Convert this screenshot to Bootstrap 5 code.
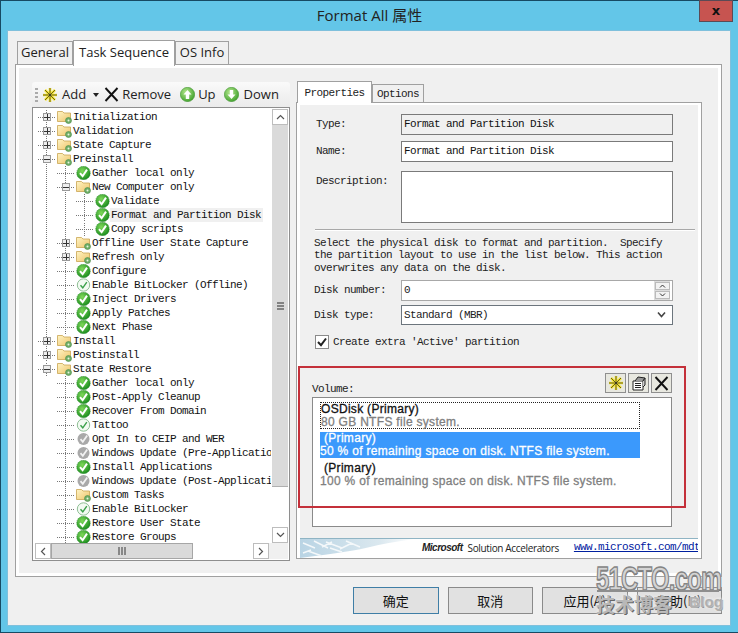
<!DOCTYPE html>
<html lang="zh">
<head>
  <meta charset="UTF-8" />
  <title>Format All 属性</title>
  <link href="https://cdn.jsdelivr.net/npm/bootstrap@5.3.3/dist/css/bootstrap.min.css" rel="stylesheet" />
  <style>
    html, body { height: 100%; }
    body { margin: 0; background: #63c6e8; overflow: hidden; }

    .win { width: 738px; height: 633px; border: 1px solid #174a63; border-right-width: 0; background: #63c6e8; position: relative; font-family: "Open Sans", sans-serif; color: #111; }
    .titlebar { height: 30px; font-size: 15px; line-height: 28px; color: #222; font-family: "Open Sans", "Noto Sans CJK SC", sans-serif; text-align: center; }
    .close-x { position: absolute; top: -1px; right: 5px; width: 34px; height: 22px; background: #c75450; border: 1px solid #5b4a55; font: bold 13px/19px "DejaVu Sans", sans-serif; color: #111; text-align: center; }
    .client { margin: 0 7px 0 7px; width: 722px; height: 594px; background: #f0f0f0; padding: 9px 8px 0 7px; box-shadow: 0 0 0 1px #7fc0dc; }

    /* tabs */
    .tabs { border: 0; height: 24px; padding-left: 2px; align-items: flex-end; flex-wrap: nowrap; position: relative; z-index: 1; }
    .tabs .nav-link { border: 1px solid #a0a0a0; border-bottom: 0; border-radius: 0; background: #f0f0f0; color: #222; padding: 0; margin: 0; text-align: center; font-size: 13px; line-height: 21px; height: 23px; }
    .tabs .nav-link.active { background: #fff; height: 26px; line-height: 23px; color: #222; border-color: #a0a0a0; margin-bottom: -2px; padding-bottom: 3px; }
    .tabs .tab-general { width: 56px; }
    .tabs .tab-seq { width: 102px; }
    .tabs .tab-info { width: 54px; }
    .outer-pane { height: 513px; border: 1px solid #a0a0a0; background: #fff; padding: 3px; }
    .outer-inner { height: 100%; background: #f0f0f0; padding: 14px 0 0 13px; }

    /* left: toolbar + tree */
    .left-col { width: 258px; flex: none; }
    .tbar { height: 25px; background: linear-gradient(#fafafa, #f0f0f0 60%, #ebebeb); border-radius: 3px 3px 0 0; font-size: 13px; color: #222; padding-left: 3px; align-items: center; }
    .grip { width: 3px; height: 14px; margin-right: 4px; background: repeating-linear-gradient(#aaa 0 2px, transparent 2px 4px); }
    .tree { height: 454px; border: 1px solid #8e8e8e; background: #fff; padding: 1px; }
    .tree-top { height: 434px; }
    .tree-rows { width: 237px; padding: 1px 0 0 3px; overflow: hidden; height: 434px; }
    .trow { height: 14px; white-space: nowrap; font: 11px/14px "Liberation Mono", monospace; letter-spacing: -.6px; color: #111; }
    .trow .txt { padding: 0 2px 0 1px; margin-left: 0; }
    .trow .txt.cur { background: #f0f0f0; }
    .gcell { width: 19px; height: 14px; flex: none; background-repeat: no-repeat; }
    .g-l { background-image: linear-gradient(#777 50%, transparent 50%); background-size: 1px 2px; background-position: 9px 0; background-repeat: repeat-y; }
    .g-t { background-image: linear-gradient(#777 50%, transparent 50%), linear-gradient(90deg, #777 50%, transparent 50%); background-size: 1px 2px, 2px 1px; background-position: 9px 0, 9px 7px; background-repeat: repeat-y, repeat-x; }
    .g-e { background-image: linear-gradient(#777 50%, transparent 50%), linear-gradient(90deg, #777 50%, transparent 50%); background-size: 1px 2px, 2px 1px; background-position: 9px -7px, 9px 7px; background-repeat: repeat-y, repeat-x; }
    .exbox { display: block; width: 8px; height: 8px; margin: 3px 0 0 6px; border: 1px solid #999; background: #eee linear-gradient(#333, #333) center / 6px 1px no-repeat; }
    .exbox.plus { background: linear-gradient(#333, #333) center / 6px 1px no-repeat, linear-gradient(#333, #333) center / 1px 6px no-repeat, #eee; }
    .ticon { width: 15px; height: 14px; margin: 0 0 0 1px; flex: none; display: block; }
    .vsb { width: 17px; flex: none; border-left: 1px solid #fff; }
    .sb-btn { width: 16px; height: 16px; border: 1px solid #bdbdbd; background: #fff; flex: none; display: flex; align-items: center; justify-content: center; }
    .vthumb { height: 362px; width: 16px; background: #dadada; border-bottom: 1px solid #b0b0b0; display: flex; align-items: center; justify-content: center; }
    .hsb { height: 16px; padding-left: 1px; }
    .hthumb { width: 142px; background: #dadada; border: 1px solid #a6a6a6; display: flex; align-items: center; justify-content: center; }
    .corner { width: 19px; background: #f0f0f0; flex: none; }

    /* right: properties */
    .right-col { width: 406px; margin-left: 6px; flex: none; }
    .tabs2 { height: 20px; padding-left: 0; }
    .tabs2 .nav-link { font: 11px/17px "Liberation Mono", monospace; letter-spacing: -.6px; height: 18px; padding-top: 1px; }
    .tabs2 .nav-link.active { height: 22px; line-height: 18px; margin-bottom: -1px; padding-top: 2px; }
    .tabs2 .tab-prop { width: 75px; margin-left: 1px; }
    .tabs2 .tab-opt { width: 52px; }
    .prop-pane { height: 457px; border: 1px solid #a0a0a0; background: #fff; padding: 2px 3px; }
    .prop-inner { height: 100%; background: #f0f0f0; position: relative; font: 11px/14px "Liberation Mono", monospace; letter-spacing: -.6px; color: #222; }
    .prop-body { height: 433px; padding: 9px 0 0 14px; }
    .frow { display: flex; width: 359px; }
    .flabel { width: 87px; flex: none; padding-top: 3px; }
    .flabel.inset { padding-left: 2px; }
    .fld { flex: 1; min-width: 0; height: 21px; border: 1px solid #7a7a7a; border-radius: 0; background: #fff; padding: 0 2px 2px; font: inherit; letter-spacing: inherit; color: #111; box-shadow: none; }
    .fld:disabled, .fld.ro { background: #f0f0f0; }
    .fld-area { height: 52px; resize: none; }
    .sep { height: 0; width: 380px; margin: 6px 0 0 1px; border-top: 1px solid #a8a8a8; border-bottom: 1px solid #fff; }
    .help { margin: 6px 0 0; line-height: 12.4px; white-space: pre; }
    .numbox { flex: 1; height: 21px; border: 1px solid #a8a8a8; background: #fff; padding: 0 2px; line-height: 18px; }
    .spin { width: 16px; flex: none; background: #dcdcdc; padding: 1px 0 1px 1px; gap: 1px; }
    .spin span { flex: 1; background: #f2f2f2; border: 1px solid #bbb; display: flex; align-items: center; justify-content: center; }
    .seltxt { height: 20px; line-height: 18px; }
    .cbox { width: 14px; height: 14px; border: 1px solid #8a8a8a; background: #fff; display: block; flex: none; }
    .vol-tools { height: 20px; gap: 2px; margin-left: 291px; margin-top: 24px; }
    .vol-btn { width: 21px; height: 20px; padding: 0; border: 1px solid #8f8f8f; background: #e8e8e0; border-radius: 0; display: flex; align-items: center; justify-content: center; }
    .vol-wrap { margin: -9px 0 0 -2px; }
    .vol-list { width: 360px; height: 130px; background: #fff; border: 1px solid #8a8a8a; margin-top: 2px; padding: 4px 0 0 7px; font: 12px/13px "Liberation Sans", sans-serif; letter-spacing: .3px; color: #808080; -webkit-text-stroke: .3px; }
    .vol-item { width: 320px; height: 26px; margin-bottom: 4px; white-space: nowrap; padding-left: 0; }
    .vol-item b { display: block; font-weight: 400; color: #111; padding-left: 4px; }
    .vol-item.first { border: 1px dotted #222; height: 27px; margin-bottom: 3px; }
    .vol-item.first b { padding-left: 0; }
    .vol-item.sel { background: #3b99fc; color: #fff; }
    .vol-item.sel b { color: #fff; }
    .red-frame { position: absolute; left: -2px; top: 261px; width: 388px; height: 142px; border: 2px solid #c4303a; pointer-events: none; }

    .brand { height: 20px; border-top: 1px solid #8fb4c4; background: #fff; overflow: hidden; letter-spacing: 0; }
    .brand svg { display: block; flex: none; }
    .ms-logo { font: italic bold 10px/18px "Liberation Sans", sans-serif; letter-spacing: -.5px; margin-left: 7px; color: #222; }
    .ms-line { width: 1px; height: 15px; background: #777; margin: 0 3px 0 2px; }
    .ms-sa { font: 10px/18px "Open Sans", sans-serif; letter-spacing: -.35px; color: #222; white-space: nowrap; }
    .ms-url { font: 11px/16px "Liberation Mono", monospace; letter-spacing: -.6px; color: #00209f; margin-left: 15px; white-space: nowrap; }

    /* bottom */
    .dlg-btns { margin-top: 10px; padding-left: 338px; gap: 9px; }
    .dlg-btn { width: 86px; height: 27px; padding: 0; border: 1px solid #8a8a8a; border-radius: 0; background: #e1e1e1; color: #111; font: 13px/25px "Noto Sans CJK SC", sans-serif; }
    .dlg-btn.dflt { border-color: #3f7ea6; }

    /* watermark */
    .wm { position: absolute; color: #a3a3a3; font-family: "Liberation Sans", sans-serif; font-weight: 700; white-space: nowrap; pointer-events: none; }
    .wm-a { left: 595px; top: 560px; font-size: 34px; line-height: 34px; letter-spacing: -1px; transform-origin: 0 0; transform: scaleX(.7); text-shadow: 0 1px 0 #555, 0 0 2px #eee; -webkit-text-stroke: 1.4px #858585; color: #d4d4d4; }
    .wm-line { left: 596px; top: 589px; width: 122px; height: 2px; background: #8e8e8e; }
    .wm-b { left: 595px; top: 592px; font: 700 19px/22px "Noto Sans CJK SC", sans-serif; text-shadow: 1px 1px 0 #666, 0 0 3px #f0f0f0; color: #b8b8b8; }
    .wm-c { left: 688px; top: 592px; font-size: 15px; line-height: 18px; text-shadow: 0 0 3px #f0f0f0, 0 0 3px #f0f0f0, 1px 1px 0 #777; color: #b0b0b0; letter-spacing: .2px; }
  </style>
</head>
<body>
  <svg width="0" height="0" class="d-block" style="position:absolute">
    <defs>
      <radialGradient id="gGreen" cx=".4" cy=".35" r=".7"><stop offset="0" stop-color="#7fd85a" /><stop offset="1" stop-color="#16891c" /></radialGradient>
      <radialGradient id="gArrow" cx=".4" cy=".35" r=".7"><stop offset="0" stop-color="#b5e88e" /><stop offset="1" stop-color="#3d9f2a" /></radialGradient>
      <linearGradient id="gFolder" x1="0" y1="0" x2="1" y2="1"><stop offset="0" stop-color="#fff4c4" /><stop offset="1" stop-color="#eec56c" /></linearGradient>
      <linearGradient id="gStreak" x1="0" x2="1"><stop offset="0" stop-color="#b9d4e4" /><stop offset=".7" stop-color="#dbe8ef" /><stop offset="1" stop-color="#fff" /></linearGradient>
    </defs>
    <symbol id="i-ok" viewBox="0 0 15 14">
      <circle cx="7.5" cy="7" r="6.8" fill="url(#gGreen)" stroke="#1b7a1f" stroke-width=".5" stroke-dasharray="1.5 .6" />
      <path d="M4 7.2l2.6 3L11 3.6" fill="none" stroke="#fff" stroke-width="2" />
    </symbol>
    <symbol id="i-dim" viewBox="0 0 15 14">
      <circle cx="7.5" cy="7" r="6.2" fill="#f2faf2" stroke="#8fbf95" />
      <path d="M4.5 7.2l2.3 2.6L10.8 4.2" fill="none" stroke="#3ba04a" stroke-width="1.4" />
    </symbol>
    <symbol id="i-off" viewBox="0 0 15 14">
      <circle cx="7.5" cy="7" r="6" fill="#a9a9a9" />
      <path d="M4.5 7.2l2.3 2.6L11.2 3.6" fill="none" stroke="#f2f2f2" stroke-width="1.8" />
    </symbol>
    <symbol id="i-folder" viewBox="0 0 15 14">
      <path d="M.5 11.5V1.5h5l1.5 1.5h6.5v8.5z" fill="url(#gFolder)" stroke="#c9a552" stroke-width=".8" />
      <circle cx="11.5" cy="10.5" r="3" fill="#6fae68" stroke="#4a8a48" stroke-width=".6" />
      <circle cx="11.5" cy="10.5" r="1" fill="#e8f5e0" />
    </symbol>
    <symbol id="i-star" viewBox="0 0 16 16">
      <g stroke="#f7e52a" stroke-width="2.6"><path d="M8 1v14M1 8h14M3 3l10 10M13 3L3 13" /></g>
      <g stroke="#222" stroke-width=".7"><path d="M8 1v14M1 8h14M3 3l10 10M13 3L3 13" /></g>
    </symbol>
    <symbol id="i-x" viewBox="0 0 15 15">
      <path d="M1.5 1l12 13M13.5 1l-12 13" stroke="#111" stroke-width="1.9" fill="none" />
    </symbol>
    <symbol id="i-up" viewBox="0 0 15 15">
      <circle cx="7.5" cy="7.5" r="7.2" fill="url(#gArrow)" stroke="#3a8f2a" stroke-width=".5" />
      <path d="M7.5 3L3.5 7.5h2.3V12h3.4V7.5h2.3z" fill="#fff" />
    </symbol>
    <symbol id="i-down" viewBox="0 0 15 15">
      <circle cx="7.5" cy="7.5" r="7.2" fill="url(#gArrow)" stroke="#3a8f2a" stroke-width=".5" />
      <path d="M7.5 12L3.5 7.5h2.3V3h3.4v4.5h2.3z" fill="#fff" />
    </symbol>
  </svg>

  <div class="win">
    <div class="titlebar">Format All 属性</div>
    <div class="close-x">x</div>

    <div class="client">
      <ul class="nav tabs">
        <li class="nav-item"><a class="nav-link tab-general" href="#">General</a></li>
        <li class="nav-item"><a class="nav-link active tab-seq" href="#">Task Sequence</a></li>
        <li class="nav-item"><a class="nav-link tab-info" href="#">OS Info</a></li>
      </ul>

      <div class="outer-pane">
        <div class="outer-inner d-flex">

          <!-- task sequence tree -->
          <div class="left-col">
            <div class="tbar d-flex">
              <span class="grip"></span>
              <svg width="16" height="16"><use href="#i-star" /></svg>
              <span class="ms-1">Add</span>
              <svg style="margin-left:7px" width="6" height="4" viewBox="0 0 6 4"><path d="M0 0h6L3 4z" fill="#222" /></svg>
              <svg style="margin-left:5px" width="15" height="15"><use href="#i-x" /></svg>
              <span style="margin-left:3px">Remove</span>
              <svg style="margin-left:9px" width="15" height="15"><use href="#i-up" /></svg>
              <span style="margin-left:3px">Up</span>
              <svg class="ms-2" width="15" height="15"><use href="#i-down" /></svg>
              <span style="margin-left:5px">Down</span>
            </div>
            <div class="tree">
              <div class="tree-top d-flex">
                <div class="tree-rows" id="treeRows"></div>
                <div class="vsb d-flex flex-column">
                  <div class="sb-btn"><svg width="9" height="6" viewBox="0 0 9 6"><path d="M1 5l3.5-3.5L8 5" fill="none" stroke="#555" stroke-width="1.2" /></svg></div>
                  <div class="vthumb"><svg width="9" height="8" viewBox="0 0 9 8"><path d="M1 1h7M1 4h7M1 7h7" stroke="#666" stroke-width="1.4" /></svg></div>
                  <div class="flex-grow-1"></div>
                  <div class="sb-btn"><svg width="9" height="6" viewBox="0 0 9 6"><path d="M1 1l3.5 3.5L8 1" fill="none" stroke="#555" stroke-width="1.2" /></svg></div>
                </div>
              </div>
              <div class="hsb d-flex">
                <div class="sb-btn"><svg width="6" height="9" viewBox="0 0 6 9"><path d="M5 1L1.5 4.5 5 8" fill="none" stroke="#555" stroke-width="1.2" /></svg></div>
                <div class="hthumb"><svg width="8" height="8" viewBox="0 0 8 8"><path d="M1 0v8M4 0v8M7 0v8" stroke="#666" stroke-width="1.4" /></svg></div>
                <div class="flex-grow-1"></div>
                <div class="sb-btn"><svg width="6" height="9" viewBox="0 0 6 9"><path d="M1 1l3.5 3.5L1 8" fill="none" stroke="#555" stroke-width="1.2" /></svg></div>
                <div class="corner"></div>
              </div>
            </div>
          </div>

          <!-- properties -->
          <div class="right-col">
            <ul class="nav tabs tabs2">
              <li class="nav-item"><a class="nav-link active tab-prop" href="#">Properties</a></li>
              <li class="nav-item"><a class="nav-link tab-opt" href="#">Options</a></li>
            </ul>
            <div class="prop-pane">
              <div class="prop-inner">
                <div class="prop-body">
                  <div class="frow"><div class="flabel inset">Type:</div><input class="form-control fld ro" value="Format and Partition Disk" readonly /></div>
                  <div class="frow" style="margin-top:6px"><div class="flabel inset">Name:</div><input class="form-control fld" value="Format and Partition Disk" /></div>
                  <div class="frow" style="margin-top:9px"><div class="flabel inset">Description:</div><textarea class="form-control fld fld-area"></textarea></div>
                  <div class="sep"></div>
                  <div class="help">Select the physical disk to format and partition.  Specify
the partition layout to use in the list below. This action
overwrites any data on the disk.</div>
                  <div class="frow" style="margin-top:6px"><div class="flabel">Disk number:</div>
                    <div class="numbox d-flex"><span class="flex-grow-1">0</span>
                      <div class="spin d-flex flex-column">
                        <span><svg width="7" height="4" viewBox="0 0 7 4"><path d="M1 3.5L3.5 1 6 3.5" fill="none" stroke="#333" /></svg></span>
                        <span><svg width="7" height="4" viewBox="0 0 7 4"><path d="M1 .5L3.5 3 6 .5" fill="none" stroke="#333" /></svg></span>
                      </div>
                    </div>
                  </div>
                  <div class="frow" style="margin-top:4px"><div class="flabel">Disk type:</div>
                    <div class="numbox seltxt d-flex justify-content-between border-secondary">
                      <span>Standard (MBR)</span>
                      <svg class="me-1 mt-1" width="9" height="9" viewBox="0 0 9 9"><path d="M1 2.5l3.5 4L8 2.5" fill="none" stroke="#444" stroke-width="1.6" /></svg>
                    </div>
                  </div>
                  <div class="d-flex align-items-center" style="margin-top:10px;margin-left:1px">
                    <span class="cbox"><svg width="12" height="12" viewBox="0 0 12 12" class="d-block"><path d="M2 6l3 3.2L10 2.5" fill="none" stroke="#222" stroke-width="2" /></svg></span>
                    <span style="margin-left:4px">Create extra 'Active' partition</span>
                  </div>

                  <div class="vol-tools d-flex">
                    <button class="btn vol-btn"><svg width="16" height="16"><use href="#i-star" /></svg></button>
                    <button class="btn vol-btn"><svg width="16" height="16" viewBox="0 0 16 16"><path d="M2 6h10v9H2z" fill="#fff" stroke="#222" /><path d="M4 8.5h6M4 10.5h6M4 12.5h6" stroke="#222" /><path d="M4 6l3-4 7 1-2 3" fill="#999" stroke="#222" /><path d="M12 6l2-3v7l-2 2" fill="#ccc" stroke="#222" /></svg></button>
                    <button class="btn vol-btn"><svg width="15" height="15"><use href="#i-x" /></svg></button>
                  </div>
                  <div class="vol-wrap d-flex">
                    <div>
                      <div style="height:11px;line-height:11px">Volume:</div>
                      <div class="vol-list">
                        <div class="vol-item first"><b>OSDisk (Primary)</b>80 GB NTFS file system.</div>
                        <div class="vol-item sel"><b>(Primary)</b>50 % of remaining space on disk. NTFS file system.</div>
                        <div class="vol-item"><b>(Primary)</b>100 % of remaining space on disk. NTFS file system.</div>
                      </div>
                    </div>
                  </div>
                </div>

                <div class="brand d-flex">
                  <svg width="115" height="19" viewBox="0 0 115 19">
                    <path d="M0 0h70q15 0 45 0v0q-30 4-45 8T0 19z" fill="url(#gStreak)" />
                    <path d="M3 4l12 5M14 2l14 7M26 3l16 6M8 12l14 5M30 9l12 4M46 2l14 6M3 14l8-3M22 8l10-5M40 10l12-6" stroke="#f4f8fa" stroke-width="1.4" />
                  </svg>
                  <span class="ms-logo">Microsoft</span>
                  <span class="ms-line mt-1"></span>
                  <span class="ms-sa">Solution Accelerators</span>
                  <a class="ms-url" href="#">www.microsoft.com/mdt</a>
                </div>
                <div class="red-frame"></div>
              </div>
            </div>
          </div>
        </div>
      </div>

      <div class="dlg-btns d-flex">
        <button class="btn dlg-btn dflt">确定</button>
        <button class="btn dlg-btn">取消</button>
        <button class="btn dlg-btn">应用(A)</button>
        <button class="btn dlg-btn">帮助(H)</button>
      </div>
    </div>

    <div class="wm wm-a">51CTO.com</div>
    <div class="wm wm-line"></div>
    <div class="wm wm-b">技术博客</div>
    <div class="wm wm-c">Blog</div>
  </div>

  <script src="https://cdn.jsdelivr.net/npm/bootstrap@5.3.3/dist/js/bootstrap.bundle.min.js"></script>
  <script>
    // guides: _ blank, l line, t tee, e end, p tee+plus, m tee+minus, M end+minus
    const rows = [
      ['p', 'folder', 'Initialization'],
      ['p', 'folder', 'Validation'],
      ['p', 'folder', 'State Capture'],
      ['m', 'folder', 'Preinstall'],
      ['lt', 'ok', 'Gather local only'],
      ['lm', 'folder', 'New Computer only'],
      ['llt', 'ok', 'Validate'],
      ['llt', 'ok', 'Format and Partition Disk', true],
      ['lle', 'ok', 'Copy scripts'],
      ['lp', 'folder', 'Offline User State Capture'],
      ['lp', 'folder', 'Refresh only'],
      ['lt', 'ok', 'Configure'],
      ['lt', 'dim', 'Enable BitLocker (Offline)'],
      ['lt', 'ok', 'Inject Drivers'],
      ['lt', 'ok', 'Apply Patches'],
      ['le', 'ok', 'Next Phase'],
      ['p', 'folder', 'Install'],
      ['p', 'folder', 'Postinstall'],
      ['M', 'folder', 'State Restore'],
      ['_t', 'ok', 'Gather local only'],
      ['_t', 'ok', 'Post-Apply Cleanup'],
      ['_t', 'ok', 'Recover From Domain'],
      ['_t', 'dim', 'Tattoo'],
      ['_t', 'off', 'Opt In to CEIP and WER'],
      ['_t', 'off', 'Windows Update (Pre-Application Installation)'],
      ['_t', 'ok', 'Install Applications'],
      ['_t', 'off', 'Windows Update (Post-Application Installation)'],
      ['_t', 'folder', 'Custom Tasks'],
      ['_t', 'dim', 'Enable BitLocker'],
      ['_t', 'ok', 'Restore User State'],
      ['_t', 'ok', 'Restore Groups']
    ];

    const cell = {
      _: '<span class="gcell"></span>',
      l: '<span class="gcell g-l"></span>',
      t: '<span class="gcell g-t"></span>',
      e: '<span class="gcell g-e"></span>',
      p: '<span class="gcell g-t"><i class="exbox plus"></i></span>',
      m: '<span class="gcell g-t"><i class="exbox"></i></span>',
      M: '<span class="gcell g-e"><i class="exbox"></i></span>'
    };

    document.getElementById('treeRows').innerHTML = rows.map(r => {
      const guides = r[0].split('').map(c => cell[c]).join('');
      const cur = r[3] ? ' cur' : '';
      return `<div class="trow d-flex">${guides}<svg class="ticon"><use href="#i-${r[1]}" /></svg><span class="txt${cur}">${r[2]}</span></div>`;
    }).join('');
  </script>
</body>
</html>
